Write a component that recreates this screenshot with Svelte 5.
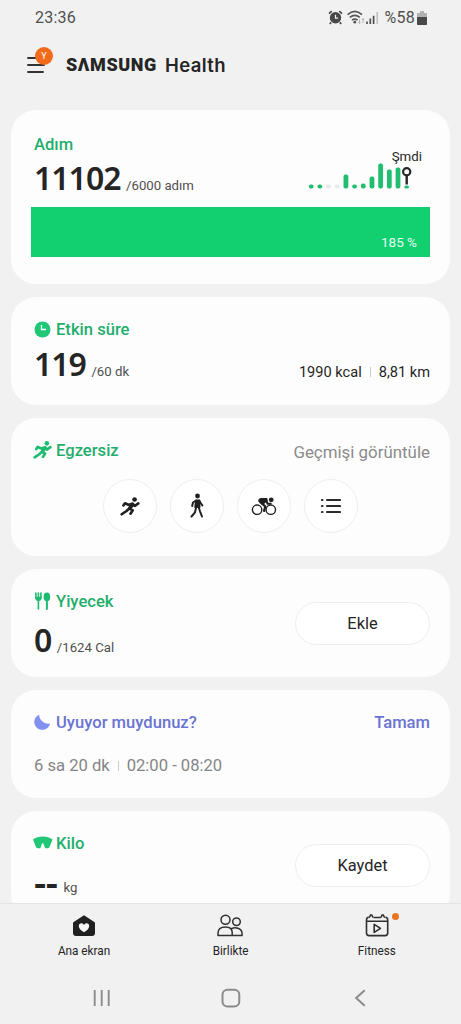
<script>
  const runner =
    "M10.2 9.2 5.6 7.2 3.8 9.8 M10.2 9.2 14.4 7.6 17 10.4 21 7.4 M14.2 8.6 10.6 13.2 14.6 15.4 12 19.4 M10.8 13 7.4 16.2 1.8 20";

  // height of each hourly bar, 0 marks an hour without steps
  const steps = [4, 4, 0, 0, 14, 4, 5, 12, 25, 19, 21, 3];
</script>

<svelte:head>
  <title>Samsung Health</title>
</svelte:head>

<div class="screen">
  <div class="status">
    <span class="time">23:36</span>
    <svg class="alarm" width="15" height="15" viewBox="0 0 15 15">
      <circle cx="7.5" cy="7.8" r="5.7" fill="#484848" />
      <path d="M1 3.7 3.7 1.2M14 3.7 11.3 1.2M3.2 12.4 1.8 14M11.8 12.4l1.4 1.6" stroke="#484848" stroke-width="1.7" />
      <path d="M7.5 4.8v3.4h2.6" stroke="#f2f2f2" stroke-width="1.2" fill="none" />
    </svg>
    <svg class="wifi" width="18" height="15" viewBox="0 0 18 15">
      <g fill="none" stroke="#555" stroke-width="1.6">
        <path d="M.6 4.6Q7.8-2 15 4.6M2.8 7.4q5-4.200 10 0M5 10.2q2.800-2.200 5.600 0" />
      </g>
      <circle cx="7.8" cy="12.2" r="1.4" fill="#555" />
      <path d="M12.500 9.500v4M11.500 12l1 1.500 1-1.500M16 13V8.500M15 10 16 8.500l1 1.500" stroke="#b4b4b4" fill="none" />
    </svg>
    <svg class="signal" width="13" height="14" viewBox="0 0 13 14">
      <path d="M1 10.5V13M4.3 7.6V13M7.6 4.8V13" stroke="#505050" stroke-width="1.7" />
      <path d="M11.2 1v12" stroke="#c2c2c2" stroke-width="1.7" />
    </svg>
    <span class="percent">%58</span>
    <svg class="battery" width="10" height="14" viewBox="0 0 10 14">
      <path d="M3 0h4v2h3v5H0V2h3z" fill="#b2b2b2" />
      <path d="M0 6h10v7.2a.8.8 0 0 1-.8.8H.8a.8.8 0 0 1-.8-.8z" fill="#484848" />
    </svg>
  </div>

  <header>
    <div class="menu">
      <svg width="18" height="18" viewBox="0 0 18 18">
        <path d="M1 2h14M1 9h16M1 16h15" stroke="#333" stroke-width="1.9" stroke-linecap="round" />
      </svg>
      <span class="avatar">Y</span>
    </div>
    <h1><span class="brand">SΛMSUNG</span> <span class="product">Health</span></h1>
  </header>

  <main>
    <section class="card steps">
      <div class="row">
        <div>
          <h2>Adım</h2>
          <p class="value"><b>11102</b><span class="goal">/6000 adım</span></p>
        </div>
        <div class="chart">
          <span class="now">Şmdi</span>
          <svg width="106" height="30" viewBox="0 0 106 30">
            {#each steps as h, i}
              <rect x={0.8 + i * 8.68} y={26.5 - (h || 4)} width="4.8" height={h || 4} rx="2" fill={h ? "#22bd70" : "#e8e8e8"} />
            {/each}
            <path d="M98.700 13v9.500" stroke="#252525" stroke-width="2.4" />
            <circle cx="98.700" cy="9.800" r="3.600" fill="#fff" stroke="#252525" stroke-width="2.200" />
          </svg>
        </div>
      </div>
      <div class="progress">185 %</div>
    </section>

    <section class="card active">
      <h2>
        <svg width="22" height="18" viewBox="0 0 22 18">
          <circle cx="8.5" cy="8.5" r="8" fill="#1fc776" />
          <path d="M7.500 4v4.500h4.500" fill="none" stroke="#fff" stroke-width="1.3" />
        </svg>Etkin süre
      </h2>
      <div class="row">
        <p class="value"><b>119</b><span class="goal">/60 dk</span></p>
        <p class="totals">1990 kcal<i></i>8,81 km</p>
      </div>
    </section>

    <section class="card exercise">
      <div class="row">
        <h2>
          <svg class="run" width="20" height="18" viewBox="0 0 24 22">
            <path d={runner} fill="none" stroke="#1ebc70" stroke-width="3.300" stroke-linejoin="round" stroke-linecap="round" />
            <path d="M9.500 8.500 14.500 7l2 3-5 5-2.500-2 2-3z" fill="#1ebc70" />
            <circle cx="16.700" cy="2.900" r="2.800" fill="#1ebc70" />
          </svg>Egzersiz
        </h2>
        <span class="history">Geçmişi görüntüle</span>
      </div>
      <div class="activities">
        <button aria-label="Koşu">
          <svg width="21" height="19" viewBox="0 0 24 22">
            <path d={runner} fill="none" stroke="#202020" stroke-width="3" stroke-linejoin="round" stroke-linecap="round" />
            <path d="M9.500 8.500 14.500 7l2 3-5 5-2.500-2 2-3z" fill="#202020" />
            <circle cx="16.700" cy="2.900" r="2.700" fill="#202020" />
          </svg>
        </button>
        <button aria-label="Yürüyüş">
          <svg width="18" height="26" viewBox="0 0 18 26">
            <circle cx="9.5" cy="3" r="2.4" fill="#202020" />
            <path d="M8 7.2h3l.8 7H7z" fill="#202020" stroke="#202020" stroke-width="1.5" stroke-linejoin="round" />
            <path d="M8 7.5 5 9.5 4.2 13M11.3 7.5l1.5 2.7 1.5 2.2M8.2 14 7 19.3 3.5 23.5M10.6 14l1.4 4.3 2 5.2" fill="none" stroke="#202020" stroke-width="2" stroke-linecap="round" stroke-linejoin="round" />
          </svg>
        </button>
        <button aria-label="Bisiklet">
          <svg width="26" height="20" viewBox="0 0 26 20">
            <g fill="none" stroke="#202020">
              <circle cx="6.1" cy="13.7" r="4.7" stroke-width="1.4" />
              <circle cx="19.8" cy="13.7" r="4.7" stroke-width="1.4" />
              <path d="M9.8 5.3 15.2 4l1.3 3.7h3.2" stroke-width="2" stroke-linecap="round" />
              <path d="m9.5 6.3 4.8 4-1.2 4.6" stroke-width="2.200" stroke-linecap="round" stroke-linejoin="round" />
            </g>
            <path d="M7.2 5.5C7 3 8.5 2 10.5 2h5.7l.5 3-4.3 3.4z" fill="#202020" />
            <circle cx="20.2" cy="3.8" r="2.4" fill="#202020" />
          </svg>
        </button>
        <button aria-label="Liste">
          <svg width="20" height="18" viewBox="0 0 20 18">
            <path d="M6 3h13M6 9h13M6 15h13M1 3h.5M1 9h.5M1 15h.5" stroke="#2b2b2b" stroke-width="2.1" stroke-linecap="round" />
          </svg>
        </button>
      </div>
    </section>

    <section class="card food">
      <div>
        <h2>
          <svg class="lift" width="22" height="19" viewBox="0 0 22 19">
            <path d="M1.900 1v5M4.400 1v16M6.900 1v5" fill="none" stroke="#1ebc70" stroke-width="1.6" stroke-linecap="round" />
            <path d="M1.100 4.800h6.600Q7.800 9 4.400 9.200 1 9 1.100 4.800" fill="#1ebc70" />
            <ellipse cx="12.900" cy="4.900" rx="3.300" ry="4.300" fill="#1ebc70" />
            <path d="M12.900 7v10" stroke="#1ebc70" stroke-width="2" stroke-linecap="round" />
          </svg>Yiyecek
        </h2>
        <p class="value"><b>0</b><span class="goal">/1624 Cal</span></p>
      </div>
      <button class="pill">Ekle</button>
    </section>

    <section class="card sleep">
      <div class="row">
        <h2>
          <svg width="22" height="18" viewBox="0 0 22 18">
            <path d="M5.300.7C-.6 3-1.200 10 2.800 13.700 7 17.500 14.200 16.400 16.200 9.400 13.500 10 10.800 9.500 8.600 7.600 6.200 5.500 5 3.500 5.300.7z" fill="#8290ee" />
          </svg>Uyuyor muydunuz?
        </h2>
        <span class="ok">Tamam</span>
      </div>
      <p class="duration">6 sa 20 dk<i></i>02:00 - 08:20</p>
    </section>

    <section class="card weight">
      <div>
        <h2>
          <svg class="scale" width="23" height="14" viewBox="0 0 23 14">
            <path d="M0 3.500C5-.5 14.500-.5 19.500 3.500L16.500 11q-.5 1.300-2 1.300h-2.300L10.300 7.500q-.6-1-1.200 0L7.300 12.300H5q-1.500 0-2-1.300z" fill="#1fc776" />
          </svg>Kilo
        </h2>
        <p class="value"><b class="empty">--</b><span class="goal">kg</span></p>
      </div>
      <button class="pill">Kaydet</button>
    </section>
  </main>

  <nav>
    <div class="tab">
      <svg width="26" height="26" viewBox="0 0 26 26">
        <path d="M13 2.300 23.300 9q.7.5.7 1.300V20q0 3-3 3H5q-3 0-3-3v-9.700Q2 9.500 2.700 9z" fill="#202020" />
        <path d="M13 19.300C9.500 17 7.800 15 7.800 12.900c0-3.200 3.900-3.700 5.200-1 1.300-2.700 5.200-2.200 5.200 1 0 2.100-1.700 4.100-5.200 6.400z" fill="#f7f7f7" />
      </svg>
      <span>Ana ekran</span>
    </div>
    <div class="tab">
      <svg width="28" height="26" viewBox="0 0 28 26">
        <g fill="none" stroke="#303030" stroke-width="1.500" stroke-linejoin="round">
          <circle cx="9.500" cy="6.700" r="4.500" />
          <circle cx="20.500" cy="8.800" r="3.800" />
          <path d="M2 22.500v-2.300q0-6.200 7.600-6.200c4 0 6.600 2 6.600 5.500v3zM15.500 15.700q3-1.700 6.500-.5 4 1.300 4 5v2.300h-9.800" />
        </g>
      </svg>
      <span>Birlikte</span>
    </div>
    <div class="tab">
      <svg width="26" height="26" viewBox="0 0 26 26">
        <g fill="none" stroke="#303030" stroke-width="1.600" stroke-linejoin="round">
          <path d="M9.700 4.500h7M4.800 4.300Q2.500 4.500 2.500 7v13q0 2.600 2.600 2.600h16q2.600 0 2.600-2.600V7q0-2.500-2.300-2.700M2.500 8.200h21.200" />
          <path d="M5 4.500q1.200-.5 1.400-2.500h1.500q.3 2 1.600 2.500M16.500 4.500q1.200-.5 1.400-2.500h1.500q.3 2 1.600 2.500" />
          <path d="M10.200 11.400v8l6.300-4z" />
        </g>
      </svg>
      <em></em>
      <span>Fitness</span>
    </div>
  </nav>

  <div class="system">
    <svg width="20" height="20" viewBox="0 0 20 20">
      <path d="M2.700 2v16M9.700 2v16M16.700 2v16" stroke="#8b8b8b" stroke-width="1.900" />
    </svg>
    <svg width="20" height="20" viewBox="0 0 20 20">
      <rect x="1.500" y="1.800" width="16.800" height="16.600" rx="5" fill="none" stroke="#8b8b8b" stroke-width="2" />
    </svg>
    <svg width="20" height="20" viewBox="0 0 20 20">
      <path d="M14.700 2.200 6.200 10l8.500 7.800" fill="none" stroke="#8b8b8b" stroke-width="2" />
    </svg>
  </div>
</div>

<style>
  :global(body) {
    background: #f1f1f1;
  }

  .screen {
    width: 461px;
    height: 1024px;
    overflow: hidden;
    display: flex;
    flex-direction: column;
    background: #f1f1f1;
    color: #252525;
    font-family: Roboto, "Liberation Sans", sans-serif;
  }

  h1, h2, p {
    margin: 0;
  }

  svg {
    display: block;
    flex: none;
  }

  button {
    font: inherit;
    color: inherit;
    padding: 0;
    background: #fff;
    border: 1px solid #eee;
  }

  .status {
    display: flex;
    align-items: center;
    height: 35px;
    padding: 0 34px 0 35px;
    box-sizing: border-box;
    color: #505050;
    font-size: 16px;
  }

  .time {
    margin-right: auto;
    letter-spacing: 0.2px;
  }

  .alarm {
    margin-right: 4px;
  }

  .signal {
    margin: 0 5px 0 1px;
  }

  .percent {
    letter-spacing: 0.300px;
  }

  .battery {
    margin: 0 0 0 2px;
  }

  header {
    display: flex;
    height: 75px;
    padding-left: 27px;
  }

  .menu {
    position: relative;
    width: 39px;
    padding-top: 21px;
  }

  .avatar {
    position: absolute;
    left: 8px;
    top: 12px;
    width: 18px;
    height: 18px;
    border-radius: 50%;
    background: #f26a1b;
    color: #fff;
    font-size: 9px;
    line-height: 18px;
    text-align: center;
  }

  h1 {
    display: flex;
    gap: 9px;
    padding-top: 18px;
    line-height: 24px;
    white-space: nowrap;
  }

  .brand {
    width: 90px;
    font: 900 18px/24px Roboto, sans-serif;
    letter-spacing: 0.6px;
  }

  .product {
    font: 600 18.500px/24px Inter, sans-serif;
    letter-spacing: 0.4px;
  }

  main {
    height: 793px;
    flex: none;
    overflow: hidden;
    display: flex;
    flex-direction: column;
    gap: 13px;
    padding: 0 11px;
  }

  .card {
    flex: none;
    box-sizing: border-box;
    height: 108px;
    padding: 23px 20px 0 23px;
    border-radius: 25px;
    background: #fdfdfd;
  }

  .row {
    display: flex;
    justify-content: space-between;
  }

  h2 {
    display: flex;
    align-items: center;
    height: 20px;
    color: #1fae6b;
    font-size: 16.600px;
    font-weight: 500;
    line-height: 20px;
  }

  .value {
    display: flex;
    align-items: baseline;
    padding-top: 4px;
    line-height: 40px;
  }

  .value b {
    font-family: "Noto Sans", sans-serif;
    font-size: 32px;
    font-weight: 560;
    letter-spacing: -1px;
  }

  .goal {
    margin-left: 5.500px;
    color: #505050;
    font-size: 13.200px;
  }

  .steps {
    height: 174px;
    padding: 25px 20px 0;
  }

  .steps .row {
    height: 72px;
    padding-left: 3px;
  }

  .steps .value {
    padding-top: 3px;
  }

  .chart {
    width: 122px;
    padding-top: 12px;
  }

  .now {
    display: block;
    height: 15px;
    margin-right: 8px;
    font-size: 13.300px;
    line-height: 20px;
    text-align: right;
  }

  .progress {
    height: 50px;
    box-sizing: border-box;
    padding: 25px 13px 0;
    background: #12cf6f;
    color: #e4fbef;
    font-size: 13.500px;
    line-height: 20px;
    text-align: right;
  }

  .totals {
    padding-top: 22px;
    font-size: 14.600px;
    line-height: 20px;
  }

  i {
    display: inline-block;
    width: 1px;
    height: 10px;
    margin: 0 8px;
    background: #ccc;
  }

  .exercise {
    height: 138px;
  }

  .run {
    margin: 0 3px 2px -1px;
  }

  .history {
    color: #8b8b8b;
    font-size: 16.900px;
    line-height: 23px;
  }

  .activities {
    display: flex;
    gap: 13px;
    padding: 15px 0 0 69px;
  }

  .activities button {
    display: grid;
    place-items: center;
    width: 54px;
    height: 54px;
    border-radius: 50%;
  }

  .food, .weight {
    display: flex;
    justify-content: space-between;
  }

  .food .value {
    padding-top: 8px;
  }

  .weight .value {
    padding-top: 8px;
    line-height: 36px;
  }

  .value .empty {
    width: 24px;
    font-size: 38px;
    line-height: 30px;
    letter-spacing: -0.300px;
    transform: translateY(4px);
  }

  .lift {
    margin-bottom: 2px;
  }

  .scale {
    margin: 0 0 3px -1px;
  }

  .pill {
    width: 135px;
    height: 43px;
    margin-top: 10px;
    border-radius: 22px;
    font-size: 16.400px;
  }

  .sleep h2, .ok {
    color: #6974d2;
  }

  .ok {
    font-size: 16.600px;
    font-weight: 500;
    line-height: 20px;
  }

  .duration {
    padding-top: 23px;
    color: #858585;
    font-size: 16.600px;
    line-height: 20px;
  }

  nav {
    display: grid;
    grid-template-columns: repeat(3, 146.500px);
    flex: none;
    box-sizing: border-box;
    height: 69px;
    padding-left: 10.500px;
    border-top: 1px solid #e4e4e4;
  }

  .tab {
    position: relative;
    display: flex;
    flex-direction: column;
    align-items: center;
    padding-top: 9px;
  }

  .tab span {
    font-size: 13.500px;
    line-height: 23px;
    transform: scaleX(0.87);
    white-space: nowrap;
  }

  .tab em {
    position: absolute;
    left: 88px;
    top: 9px;
    width: 7px;
    height: 7px;
    border-radius: 50%;
    background: #e87522;
  }

  .system {
    display: flex;
    justify-content: space-between;
    padding: 16px 91px 0 92px;
  }
</style>
